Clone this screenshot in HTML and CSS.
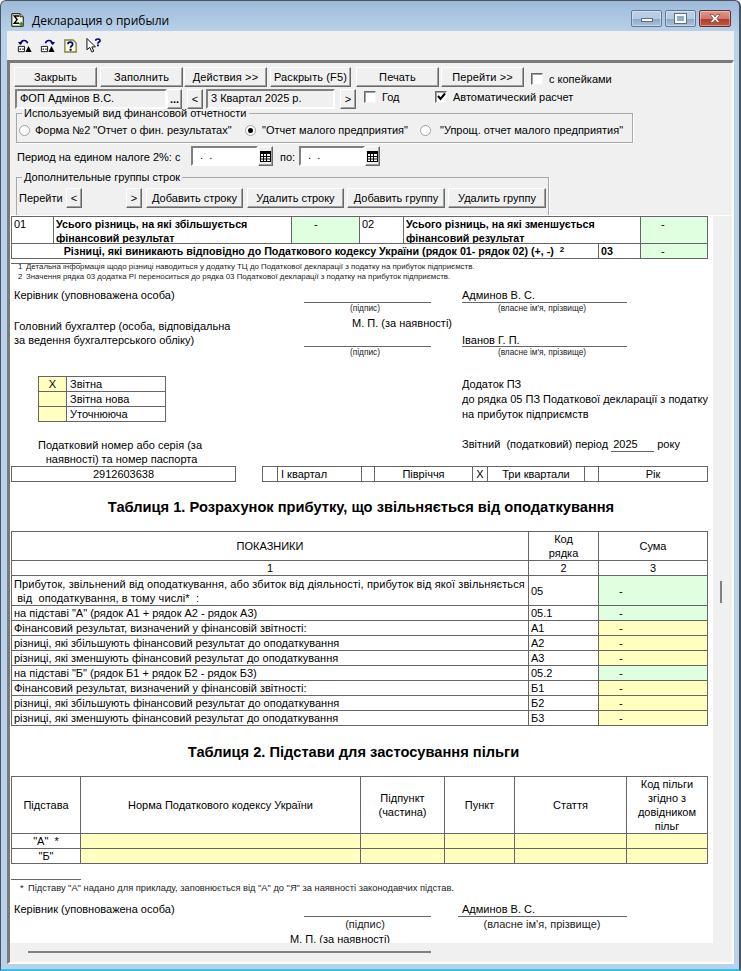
FILE: index.html
```html
<!DOCTYPE html>
<html lang="uk">
<head>
<meta charset="utf-8">
<title>Декларация о прибыли</title>
<link rel="stylesheet" href="styles.css">
</head>
<body>
<div class="window">
  <header class="titlebar">
    <svg class="appicon" width="13" height="14" viewBox="0 0 16 17"><path d="M1 .8H11L15 4.5V16.2H1Z" fill="#ffffe0" stroke="#000" stroke-width="1.2"/><path d="M11 .8V4.5H15" fill="#c8c88c" stroke="#000"/><path d="M10 3.5H4L7.5 8L4 12.5H10" fill="none" stroke="#000" stroke-width="1.8"/><path d="M12.5 10.5V16M9.8 13.2H15" stroke="#109010" stroke-width="1.6"/></svg>
    <span class="wintitle">Декларация о прибыли</span>
    <div class="winbtns">
      <div class="winbtn"><span class="g-min"></span></div>
      <div class="winbtn wb-max"><span class="g-max"></span></div>
      <div class="winbtn wb-close"><svg width="16" height="11" viewBox="0 0 16 11"><path d="M3 1.5H6L8 4L10 1.5H13L9.8 5.5L13 9.5H10L8 7L6 9.5H3L6.2 5.5Z" fill="#fff" stroke="#7a3a30" stroke-width=".7"/></svg></div>
    </div>
  </header>
  <div class="client">
    <div class="toolbar">
      <svg class="tool" width="16" height="15" viewBox="0 0 18 17"><path d="M4 7C4 2.5 10 1 12 6" fill="none" stroke="#000080" stroke-width="1.8"/><path d="M1 4.5L6.5 4.5L3.5 8Z" fill="#000080"/><path d="M1.5 9.5H8.5V15.5H1.5Z" fill="#fff" stroke="#000"/><path d="M3 12.5H4.5M6 12.5H7.5" stroke="#000" stroke-width="1.4"/><path d="M9.5 16L13 9L16.5 16Z" fill="#000"/></svg>
      <svg class="tool" width="16" height="15" viewBox="0 0 18 17"><path d="M14 7C14 2.5 8 1 6 6" fill="none" stroke="#000080" stroke-width="1.8"/><path d="M17 4.5L11.5 4.5L14.5 8Z" fill="#000080"/><path d="M1.5 9.5H8.5V15.5H1.5Z" fill="#fff" stroke="#000"/><path d="M3 12.5H4.5M6 12.5H7.5" stroke="#000" stroke-width="1.4"/><path d="M9.5 16L13 9L16.5 16Z" fill="#000"/></svg>
      <svg class="tool t3" width="13" height="14" viewBox="0 0 15 16"><path d="M1 1H10.5L14 4.5V15H1Z" fill="#ffffd8" stroke="#808040" stroke-width="1.6"/><path d="M4.5 6C4.5 2.8 10 2.8 10 6C10 8 7.5 8 7.5 10" fill="none" stroke="#000090" stroke-width="2"/><path d="M6.4 11.2H8.8V13.4H6.4Z" fill="#000090"/></svg>
      <svg class="tool t4" width="15" height="15" viewBox="0 0 16 16"><path d="M1 .5V12.5L4 10L6.3 15L8.3 14L6.2 9.5H10Z" fill="#fff" stroke="#000"/><path d="M10.3 2.8C10.3 .4 15 .4 15 2.8C15 4.3 12.7 4.3 12.7 6" fill="none" stroke="#000080" stroke-width="1.7"/><path d="M11.7 7H13.7V8.8H11.7Z" fill="#000080"/></svg>
    </div>
    <div class="panel">
      <div class="controls">
        <div class="row row1">
          <button class="btn b83 sp">Закрыть</button>
          <button class="btn b83 ml3 sp">Заполнить</button>
          <button class="btn b83 ml1 sp">Действия &gt;&gt;</button>
          <button class="btn b81 ml3 sp">Раскрыть (F5)</button>
          <button class="btn b83 ml5 sp">Печать</button>
          <button class="btn b83 ml2 sp">Перейти &gt;&gt;</button>
          <span class="check ml7 down2"></span>
          <span class="lbl ml6 down2">с копейками</span>
        </div>
        <div class="row row2">
          <div class="field fop">ФОП Адмінов В.С.</div>
          <button class="btn dots">...</button>
          <button class="btn arrow ml5">&lt;</button>
          <div class="field quarter">3 Квартал 2025 р.</div>
          <button class="btn arrow ml5">&gt;</button>
          <span class="check ml8 up"></span>
          <span class="lbl ml6 god up">Год</span>
          <span class="check checked up"><svg width="9" height="9" viewBox="0 0 9 9"><path d="M1 4L3.5 7L8 1.5" fill="none" stroke="#000" stroke-width="2"/></svg></span>
          <span class="lbl ml6 up">Автоматический расчет</span>
        </div>
        <fieldset class="group gr1">
          <legend>Используемый вид финансовой отчетности</legend>
          <div class="radios">
            <span class="radio"></span><span class="lbl r1">Форма №2 "Отчет о фин. результатах"</span>
            <span class="radio on"></span><span class="lbl r2">"Отчет малого предприятия"</span>
            <span class="radio"></span><span class="lbl r3">"Упрощ. отчет малого предприятия"</span>
          </div>
        </fieldset>
        <div class="row row3">
          <span class="lbl period">Период на едином налоге 2%: с</span>
          <div class="datefield">. &nbsp;.</div>
          <button class="btn cal"><svg width="11" height="11" viewBox="0 0 11 11"><path d="M0 0H11V11H0Z" fill="#000"/><path d="M1 3H3V5H1ZM4 3H6V5H4ZM7 3H10V5H7ZM1 6H3V7.5H1ZM4 6H6V7.5H4ZM7 6H10V7.5H7ZM1 8.5H3V10H1ZM4 8.5H6V10H4ZM7 8.5H10V10H7Z" fill="#fff"/></svg></button>
          <span class="lbl po">по:</span>
          <div class="datefield df2">. &nbsp;.</div>
          <button class="btn cal"><svg width="11" height="11" viewBox="0 0 11 11"><path d="M0 0H11V11H0Z" fill="#000"/><path d="M1 3H3V5H1ZM4 3H6V5H4ZM7 3H10V5H7ZM1 6H3V7.5H1ZM4 6H6V7.5H4ZM7 6H10V7.5H7ZM1 8.5H3V10H1ZM4 8.5H6V10H4ZM7 8.5H10V10H7Z" fill="#fff"/></svg></button>
        </div>
        <fieldset class="group gr2">
          <legend>Дополнительные группы строк</legend>
          <div class="groupbtns">
            <span class="lbl go">Перейти</span>
            <button class="btn arrow2">&lt;</button>
            <button class="btn arrow2 ml44">&gt;</button>
            <button class="btn b97 ml4">Добавить строку</button>
            <button class="btn b97 ml4">Удалить строку</button>
            <button class="btn b98 ml3">Добавить группу</button>
            <button class="btn b98 ml3">Удалить группу</button>
          </div>
        </fieldset>
      </div>
      <div class="docwrap">
        <div class="doc">
          <table class="sheet top">
            <colgroup><col class="c42"><col class="c238"><col class="c68"><col class="c44"><col class="c195"><col class="c42"><col class="c67"></colgroup>
            <tr class="h27">
              <td class="va-t"><div class="clip">01</div></td><td class="b va-t"><div class="clip">Усього різниць, на які збільшується<br>фінансовий результат</div></td><td class="green dash-top va-t"><div class="clip">-</div></td>
              <td class="va-t"><div class="clip">02</div></td><td class="b va-t" colspan="2"><div class="clip">Усього різниць, на які зменшується<br>фінансовий результат</div></td><td class="green dash va-t"><div class="clip">-</div></td>
            </tr>
            <tr class="h15">
              <td colspan="5" class="b ctr shift">Різниці, які виникають відповідно до Податкового кодексу України (рядок 01- рядок 02) (+, -) &nbsp;<sup class="sup">2</sup></td>
              <td class="b">03</td><td class="green dash">-</td>
            </tr>
          </table>
          <div class="noterule first"></div>
          <p class="note"><span class="idx">1</span>Детальна інформація щодо різниці наводиться у додатку ТЦ до Податкової декларації з податку на прибуток підприємств.</p>
          <p class="note"><span class="idx">2</span>Значення рядка 03 додатка РІ переноситься до рядка 03 Податкової декларації з податку на прибуток підприємств.</p>
          <div class="signs">
            <div class="s-who">Керівник (уповноважена особа)</div><div class="s-line"></div><div class="s-name">Админов В. С.</div>
            <div class="s-cap c2">(підпис)</div><div class="s-cap c4">(власне ім'я, прізвище)</div>
            <div class="s-who2">Головний бухгалтер (особа, відповідальна<br>за ведення бухгалтерського обліку)</div>
            <div class="s-mp">М. П. (за наявності)</div>
            <div class="s-line r4"></div><div class="s-name r4">Іванов Г. П.</div>
            <div class="s-cap c2 r5">(підпис)</div><div class="s-cap c4 r5">(власне ім'я, прізвище)</div>
          </div>
          <div class="mid">
            <div class="mid-left">
              <table class="sheet kind">
                <colgroup><col class="c28"><col class="c99"></colgroup>
                <tr class="h15"><td class="yellow ctr">Х</td><td class="pl">Звітна</td></tr>
                <tr class="h15"><td class="yellow"></td><td class="pl">Звітна нова</td></tr>
                <tr class="h15"><td class="yellow"></td><td class="pl">Уточнююча</td></tr>
              </table>
              <p class="taxno">Податковий номер або серія (за<br>&nbsp;наявності) та номер паспорта</p>
            </div>
            <div class="mid-right">
              <p>Додаток ПЗ</p>
              <p>до рядка 05 ПЗ Податкової декларації з податку</p>
              <p>на прибуток підприємств</p>
              <p class="period-line">Звітний &nbsp;(податковий) період <span class="year">2025</span> року</p>
            </div>
          </div>
          <table class="sheet taxrow">
            <colgroup><col class="c224"><col class="c27"><col class="c15"><col class="c84"><col class="c13"><col class="c98"><col class="c15"><col class="c97"><col class="c14"><col class="c109"></colgroup>
            <tr class="h15">
              <td class="ctr">2912603638</td><td class="gap"></td><td></td><td class="pl">I квартал</td><td></td><td class="ctr">Півріччя</td><td class="ctr">Х</td><td class="ctr">Три квартали</td><td></td><td class="ctr">Рік</td>
            </tr>
          </table>
          <h2 class="tabletitle tt1">Таблиця 1. Розрахунок прибутку, що звільняється від оподаткування</h2>
          <table class="sheet t1">
            <colgroup><col class="c517"><col class="c70"><col class="c109"></colgroup>
            <tr class="h29"><td class="ctr">ПОКАЗНИКИ</td><td class="ctr">Код<br>рядка</td><td class="ctr">Сума</td></tr>
            <tr class="h15"><td class="ctr">1</td><td class="ctr">2</td><td class="ctr">3</td></tr>
            <tr class="h30"><td class="wide">Прибуток, звільнений від оподаткування, або збиток від діяльності, прибуток від якої звільняється<br>&nbsp;від &nbsp;оподаткування, в тому числі* &nbsp;:</td><td>05</td><td class="green dash">-</td></tr>
            <tr class="h15"><td>на підставі "А" (рядок А1 + рядок А2 - рядок А3)</td><td>05.1</td><td class="green dash">-</td></tr>
            <tr class="h15"><td>Фінансовий результат, визначений у фінансовій звітності:</td><td>А1</td><td class="yellow dash">-</td></tr>
            <tr class="h15"><td>різниці, які збільшують фінансовий результат до оподаткування</td><td>А2</td><td class="yellow dash">-</td></tr>
            <tr class="h15"><td>різниці, які зменшують фінансовий результат до оподаткування</td><td>А3</td><td class="yellow dash">-</td></tr>
            <tr class="h15"><td>на підставі "Б" (рядок Б1 + рядок Б2 - рядок Б3)</td><td>05.2</td><td class="green dash">-</td></tr>
            <tr class="h15"><td>Фінансовий результат, визначений у фінансовій звітності:</td><td>Б1</td><td class="yellow dash">-</td></tr>
            <tr class="h15"><td>різниці, які збільшують фінансовий результат до оподаткування</td><td>Б2</td><td class="yellow dash">-</td></tr>
            <tr class="h15"><td>різниці, які зменшують фінансовий результат до оподаткування</td><td>Б3</td><td class="yellow dash">-</td></tr>
          </table>
          <h2 class="tabletitle tt2">Таблиця 2. Підстави для застосування пільги</h2>
          <table class="sheet t2">
            <colgroup><col class="c69"><col class="c280"><col class="c84"><col class="c70"><col class="c112"><col class="c81"></colgroup>
            <tr class="h57"><td class="ctr">Підстава</td><td class="ctr">Норма Податкового кодексу України</td><td class="ctr">Підпункт<br>(частина)</td><td class="ctr">Пункт</td><td class="ctr">Стаття</td><td class="ctr">Код пільги<br>згідно з<br>довідником<br>пільг</td></tr>
            <tr class="h15"><td class="ctr">"А" &nbsp;*</td><td class="yellow"></td><td class="yellow"></td><td class="yellow"></td><td class="yellow"></td><td class="yellow"></td></tr>
            <tr class="h15"><td class="ctr">"Б"</td><td class="yellow"></td><td class="yellow"></td><td class="yellow"></td><td class="yellow"></td><td class="yellow"></td></tr>
          </table>
          <div class="noterule second"></div>
          <p class="note n3"><span class="idx">*</span>Підставу "А" надано для прикладу, заповнюється від "А" до "Я" за наявності законодавчих підстав.</p>
          <div class="signs s2">
            <div class="s-who">Керівник (уповноважена особа)</div><div class="s-line"></div><div class="s-name wide-line">Админов В. С.</div>
            <div class="s-cap big c2">(підпис)</div><div class="s-cap big c4">(власне ім'я, прізвище)</div>
            <div class="s-mp2">М. П. (за наявності)</div>
          </div>
        </div>
        <div class="vscroll"><span class="vthumb"></span></div>
      </div>
      <div class="hscroll"><span class="hthumb"></span></div>
    </div>
  </div>
</div>
</body>
</html>
```
FILE: styles.css
```css
*{box-sizing:border-box}
html,body{margin:0;padding:0;background:#fff}
body{width:741px;height:971px;overflow:hidden;font:11px "Liberation Sans",Arial,sans-serif;color:#000}
p{margin:0}
.window{width:741px;height:971px;display:flex;flex-direction:column;border-radius:6px 6px 0 0;overflow:hidden;background:linear-gradient(#9dbbd9 0,#b9d1ea 31px);border:1px solid #4a5560;border-bottom:2px solid #2cc5e8;border-width:1px 2px 2px 1px}
.titlebar{height:30px;display:flex;align-items:center;padding:8px 0 0 10px;flex:none}
.appicon{margin-right:8px;flex:none}
.wintitle{font:12px "Open Sans","Liberation Sans",sans-serif}
.winbtns{margin-left:auto;display:flex;gap:3px;margin-right:8px;margin-top:-3px}
.winbtn{width:31px;height:17px;border:1px solid #5f7a96;border-radius:2px;background:linear-gradient(#bad0e6 0,#b4cbe3 50%,#88a8c8 52%,#a8c4dc 100%);display:flex;align-items:center;justify-content:center;box-shadow:inset 0 0 0 1px rgba(255,255,255,.35)}
.wb-close{width:32px;border-color:#6a2a30;background:linear-gradient(#d9998c 0,#cf7a6c 50%,#b03a28 52%,#c05a48 100%)}
.g-min{display:block;width:12px;height:4px;background:#fff;border:1px solid #5a6f88;margin-top:3px}
.g-max{display:block;width:11px;height:9px;border:2px solid #fff;outline:1px solid #5a6f88;background:#8fadca}
.client{flex:1;margin:0 5px 5px 6px;background:#f0f0f0;display:flex;flex-direction:column;min-height:0}
.toolbar{height:29px;flex:none;display:flex;align-items:center;padding:0 0 0 10px;gap:7px}
.tool{flex:none}
.t3{margin-left:1px}
.t4{margin-left:2px}
.panel{flex:1;display:flex;flex-direction:column;min-height:0;border-style:solid;border-width:3px 2px 2px 3px;border-color:#7a7a7a #fff #fff #7a7a7a}
.controls{height:153px;flex:none;overflow:hidden;padding:4px 0 0 4px;border-bottom:1px solid #fff}
.row{display:flex;align-items:center}
.row1{height:20px}
.row2{height:20px;margin-top:2px;padding-left:1px}
.btn{font:11px "Liberation Sans",Arial,sans-serif;color:#000;background:#f0f0f0;height:20px;padding:0;border:1px solid;border-color:#fff #696969 #696969 #fff;box-shadow:inset -1px -1px #a0a0a0;flex:none}
.sp{letter-spacing:.12px}
.b83{width:83px}.b81{width:81px}.b97{width:97px}.b98{width:98px}
.ml1{margin-left:1px}.ml2{margin-left:2px}.ml3{margin-left:3px}.ml4{margin-left:4px}.ml5{margin-left:5px}.ml6{margin-left:6px}.ml7{margin-left:7px}.ml8{margin-left:8px}.ml44{margin-left:44px}
.down2{margin-top:4px}
.up{margin-bottom:5px}
.lbl{white-space:nowrap;flex:none}
.god{width:20px}
.check{width:12px;height:12px;flex:none;background:#fff;border:1px solid;border-color:#696969 #f4f4f4 #f4f4f4 #696969;box-shadow:inset 1px 1px #a0a0a0;display:inline-flex;align-items:center;justify-content:center}
.checked{margin-left:33px}
.field{height:20px;background:#f0f0f0;border:2px solid;border-color:#808080 #fff #fff #808080;padding:0 3px;line-height:15px;white-space:nowrap}
.fop{width:152px}
.dots{width:15px;margin-left:0;font-weight:700;line-height:10px}
.arrow{width:16px}
.quarter{width:129px;margin-left:3px}
.group{margin:0;padding:0;border:1px solid #a8a8a8;box-shadow:1px 1px #fff;min-width:0}
.group legend{padding:0 2px;margin-left:5px;line-height:13px}
.gr1{width:617px;height:36px;margin:-2px 0 0 2px}
.radios{display:flex;align-items:center;height:20px;padding-left:2px}
.radio{width:11px;height:11px;border-radius:50%;background:#fff;border:1px solid #a0a0a0;flex:none;position:relative}
.radio.on::after{content:"";position:absolute;left:2px;top:2px;width:5px;height:5px;border-radius:50%;background:#000}
.r1{margin-left:5px;width:210px}
.r2{margin-left:6px;width:158px}
.r3{margin-left:9px}
.row3{height:20px;margin-top:3px;padding-left:3px}
.period{width:174px;padding-top:1px}
.datefield{width:67px;height:20px;background:#fff;border:2px solid;border-color:#808080 #fff #fff #808080;padding-left:7px;line-height:15px;white-space:nowrap}
.df2{width:66px}
.cal{width:15px;height:20px;display:flex;align-items:center;justify-content:center}
.po{width:24px;margin-left:2px;padding:1px 0 0 5px}
.gr2{width:533px;height:50px;margin:4px 0 0 2px}
.group.gr2 legend{line-height:14px}
.groupbtns{display:flex;align-items:center;height:20px;padding-left:2px;margin-top:4px}
.go{width:47px}
.arrow2{width:16px;height:20px}
.docwrap{flex:1;display:flex;min-height:0}
.doc{width:703px;background:#fff;overflow:hidden;flex:none}
.vscroll{flex:1;background:#f0f0f0;padding:365px 0 0 7px}
.vthumb{display:block;width:2px;height:22px;background:#808080}
.hscroll{height:19px;flex:none;padding:8px 0 0 18px;background:#f0f0f0}
.hthumb{display:block;width:403px;height:2px;background:#808080}
.sheet{border-collapse:collapse;table-layout:fixed;margin-left:1px;font-size:11px}
.sheet td{border:1px solid #666;padding:0 2px;line-height:14px;overflow:hidden;color:#000;white-space:nowrap}
.clip{height:26px}
.wide{letter-spacing:.1px}
.h15{height:15px}.h27{height:27px}.h29{height:29px}.h30{height:30px}.h57{height:57px}
.c13{width:13px}.c14{width:14px}.c15{width:15px}.c27{width:27px}.c28{width:28px}.c42{width:42px}.c44{width:44px}.c67{width:67px}.c68{width:68px}.c69{width:69px}.c70{width:70px}.c81{width:81px}.c84{width:84px}.c97{width:97px}.c98{width:98px}.c99{width:99px}.c109{width:109px}.c112{width:112px}.c195{width:195px}.c224{width:224px}.c238{width:238px}.c280{width:280px}.c517{width:517px}
.top,.t1,.t2,.taxrow{width:696px}
.b{font-weight:700;font-size:10.7px}
.ctr{text-align:center}
.shift{padding-left:20px!important}
.pl{padding-left:3px!important}
.va-t{vertical-align:top}
.green{background:#e0ffe0}
.yellow{background:#ffffc0}
.dash{padding-left:20px!important;text-align:left}
.dash-top{padding-left:22px!important;text-align:left}
.sup{font-size:8px;line-height:0;vertical-align:3px}
.noterule{width:70px;height:1px;background:#666;margin-left:1px}
.first{margin-top:4px}
.second{margin-top:15px}
.note{font-size:7.9px;line-height:10px;padding-left:16px;white-space:nowrap;color:#222}
.idx{display:inline-block;width:7px;margin-left:-7px;position:relative;left:-1px}
.first + .note{margin-top:-2px}
.signs{display:grid;grid-template-columns:4px 290px 127px 31px 165px;grid-template-rows:15px 11px 19px 14px 12px;margin-top:6px}
.s-who{grid-column:2;grid-row:1;line-height:14px;white-space:nowrap}
.s-line{grid-column:3;grid-row:1;border-bottom:1px solid #666}
.s-name{grid-column:5;grid-row:1;border-bottom:1px solid #666;line-height:14px}
.s-cap{grid-row:2;text-align:center;font-size:8.3px;line-height:11px;color:#222;padding-right:5px;white-space:nowrap}
.c2{grid-column:3}.c4{grid-column:5}
.s-who2{grid-column:2;grid-row:3/5;line-height:14px;padding-top:5px;white-space:nowrap}
.s-mp{grid-column:3/5;grid-row:3;line-height:14px;padding:2px 0 0 48px;white-space:nowrap}
.r4{grid-row:4}
.r5{grid-row:5}
.mid{display:flex;margin-top:17px;height:90px}
.mid-left{width:452px}
.kind{margin-left:28px;width:127px}
.taxno{width:220px;text-align:center;line-height:14px;margin-top:16px}
.mid-right{width:246px;overflow:hidden;white-space:nowrap;line-height:15px;padding-top:1px;flex:none}
.period-line{margin-top:15px}
.year{display:inline-block;width:43px;border-bottom:1px solid #666;line-height:14px;padding-left:2px}
.gap{border-top:0!important;border-bottom:0!important}
.tabletitle{margin:0;display:flex;align-items:center;justify-content:center;font-size:14.67px;line-height:16px;font-weight:700;white-space:nowrap}
.tt1{width:702px;height:49px;padding-top:1px}
.tt2{width:687px;height:50px;padding-top:2px}
.n3{font-size:9.3px;margin-top:3px;padding-left:18px}
.s2{margin-top:9px;grid-template-rows:15px 15px 15px}
.wide-line{margin-left:-4px;padding-left:4px}
.big{font-size:11px;line-height:15px}
.s-mp2{grid-column:3/5;grid-row:3;line-height:14px;margin-left:-14px;white-space:nowrap}
```
